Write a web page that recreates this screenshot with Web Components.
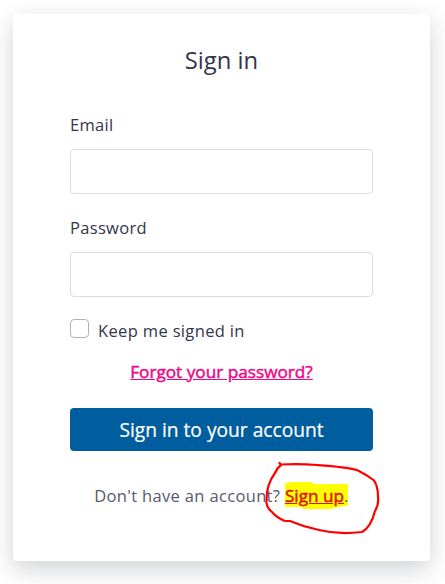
<!DOCTYPE html>
<html lang="en">
<head>
<meta charset="utf-8">
<title>Sign in</title>
<style>
    body {
        margin: 0;
        height: 584px;
        overflow: hidden;
        background-color: #fff;
        font-family: "Open Sans", sans-serif;
        color: #33364c;
    }
</style>
</head>
<body>
<sign-in-card></sign-in-card>

<script>
const define = (name, html) => {
    const template = document.createElement('template');
    template.innerHTML = html.trim();

    customElements.define(name, class extends HTMLElement {
        connectedCallback() {
            if (this.shadowRoot) return;
            const shadowRoot = this.attachShadow({ mode: 'open' });
            shadowRoot.appendChild(template.content.cloneNode(true));
        }
    });
};

define('text-field', `
<style>
    :host {
        display: block;
    }
    label {
        display: block;
        height: 24px;
        margin-bottom: 12px;
        font-size: 16.5px;
        line-height: 24px;
        letter-spacing: 0.32px;
    }
    input {
        display: block;
        box-sizing: border-box;
        width: 100%;
        height: 45px;
        padding: 0 12px;
        border: 1px solid #dcdcde;
        border-radius: 4px;
        background-color: #fff;
        font: inherit;
        outline: none;
    }
</style>

<label for="field"><slot></slot></label>
<input id="field">
`);

define('check-option', `
<style>
    :host {
        display: block;
    }
    label {
        display: flex;
        gap: 9px;
        font-size: 16.5px;
        line-height: 23px;
        letter-spacing: 0.35px;
    }
    input {
        appearance: none;
        box-sizing: border-box;
        width: 19px;
        height: 19px;
        margin: 0;
        border: 1px solid #b1b3bd;
        border-radius: 4px;
        background-color: #fff;
    }
</style>

<label><input type="checkbox"><slot></slot></label>
`);

define('text-link', `
<style>
    :host {
        display: inline;
    }
    a {
        color: var(--link-color, #ec0a8c);
        font-size: 17.2px;
        letter-spacing: 0;
        text-decoration: underline;
        -webkit-text-stroke: 0.5px;
    }
</style>

<a href="#"><slot></slot></a>
`);

define('primary-button', `
<style>
    :host {
        display: block;
    }
    button {
        display: block;
        width: 100%;
        height: 43px;
        padding: 0;
        border: 0;
        border-radius: 4px;
        background-color: #005e9e;
        color: #fff;
        font-family: inherit;
        font-size: 19.2px;
        line-height: 43px;
        -webkit-text-stroke: 0.2px;
    }
</style>

<button type="button"><slot></slot></button>
`);

// Yellow highlighter and a hand-drawn ring around the slotted content
define('marker-note', `
<style>
    :host {
        display: inline-block;
        position: relative;
    }
    svg {
        position: absolute;
        left: -24px;
        top: -24px;
        overflow: visible;
        pointer-events: none;
    }
    .content {
        position: relative;
    }
</style>

<svg width="120" height="80" viewBox="260 460 120 80">
    <path fill="#ff0" d="M284 483 L292 482 H311 L313 484 H347 V506 H343 L332 508 V509 H302 L301 507 H284 Z"/>
</svg>
<span class="content"><slot></slot></span>
<svg width="120" height="80" viewBox="260 460 120 80" fill="none">
    <path stroke="#f00" stroke-width="2.2" stroke-linecap="round" stroke-linejoin="round"
        d="M278.5 463 L280 465 Q276 468 274 473 C268 481 265 491 265.500 503 Q266 508 271 512 Q276 518 284 521 H289 Q303 527 318 530 Q338 535 361 532 Q370 527 374 511 Q378 505 377 497 Q377 485 372.500 480 Q366 475 356 470 C345 467 330 466 316 465 Q298 463.500 280 464.500"/>
</svg>
`);

define('sign-in-card', `
<style>
    :host {
        display: flex;
        flex-direction: column;
        box-sizing: border-box;
        width: 417px;
        height: 547px;
        margin: 14px 0 0 13px;
        padding: 30px 57px 0;
        border-radius: 4px;
        background-color: #fff;
        box-shadow: 0 8px 24px rgba(25, 30, 40, 0.2);
        white-space: nowrap;
    }
    h1 {
        height: 32px;
        margin: 0 0 37px;
        font-size: 23.8px;
        font-weight: 400;
        line-height: 32px;
        text-align: center;
    }
    text-field {
        margin-bottom: 22px;
    }
    .forgot {
        margin: 18px 0 24px;
        font-size: 16px;
        line-height: 24px;
        text-align: center;
    }
    .sign-up {
        margin: 33px 0 0;
        color: #59596c;
        font-size: 16.5px;
        line-height: 24px;
        letter-spacing: 0.34px;
        text-align: center;
    }
    .sign-up text-link {
        --link-color: #e3120b;
    }
</style>

<h1>Sign in</h1>
<text-field>Email</text-field>
<text-field>Password</text-field>
<check-option>Keep me signed in</check-option>
<p class="forgot"><text-link>Forgot your password?</text-link></p>
<primary-button>Sign in to your account</primary-button>
<p class="sign-up">Don't have an account? <marker-note><text-link>Sign up</text-link>.</marker-note></p>
`);
</script>
</body>
</html>
